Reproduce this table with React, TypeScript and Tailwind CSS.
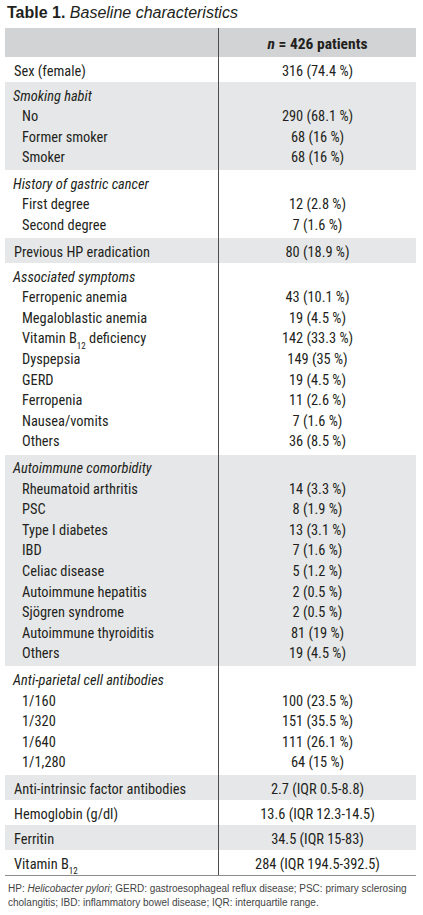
type Line = { label: React.ReactNode; value?: string; kind: "head" | "item" | "single" }

const B12 = (
  <>
    B<sub className="text-[9px] align-[-3px]">12</sub>
  </>
)

const sections: { bg: string; lines: Line[] }[] = [
  { bg: "bg-white", lines: [{ label: "Sex (female)", value: "316 (74.4 %)", kind: "single" }] },
  {
    bg: "bg-[#e6e7e8]",
    lines: [
      { label: "Smoking habit", kind: "head" },
      { label: "No", value: "290 (68.1 %)", kind: "item" },
      { label: "Former smoker", value: "68 (16 %)", kind: "item" },
      { label: "Smoker", value: "68 (16 %)", kind: "item" },
    ],
  },
  {
    bg: "bg-white",
    lines: [
      { label: "History of gastric cancer", kind: "head" },
      { label: "First degree", value: "12 (2.8 %)", kind: "item" },
      { label: "Second degree", value: "7 (1.6 %)", kind: "item" },
    ],
  },
  { bg: "bg-[#e6e7e8]", lines: [{ label: "Previous HP eradication", value: "80 (18.9 %)", kind: "single" }] },
  {
    bg: "bg-white",
    lines: [
      { label: "Associated symptoms", kind: "head" },
      { label: "Ferropenic anemia", value: "43 (10.1 %)", kind: "item" },
      { label: "Megaloblastic anemia", value: "19 (4.5 %)", kind: "item" },
      { label: <>Vitamin {B12} deficiency</>, value: "142 (33.3 %)", kind: "item" },
      { label: "Dyspepsia", value: "149 (35 %)", kind: "item" },
      { label: "GERD", value: "19 (4.5 %)", kind: "item" },
      { label: "Ferropenia", value: "11 (2.6 %)", kind: "item" },
      { label: "Nausea/vomits", value: "7 (1.6 %)", kind: "item" },
      { label: "Others", value: "36 (8.5 %)", kind: "item" },
    ],
  },
  {
    bg: "bg-[#e6e7e8]",
    lines: [
      { label: "Autoimmune comorbidity", kind: "head" },
      { label: "Rheumatoid arthritis", value: "14 (3.3 %)", kind: "item" },
      { label: "PSC", value: "8 (1.9 %)", kind: "item" },
      { label: "Type I diabetes", value: "13 (3.1 %)", kind: "item" },
      { label: "IBD", value: "7 (1.6 %)", kind: "item" },
      { label: "Celiac disease", value: "5 (1.2 %)", kind: "item" },
      { label: "Autoimmune hepatitis", value: "2 (0.5 %)", kind: "item" },
      { label: "Sjögren syndrome", value: "2 (0.5 %)", kind: "item" },
      { label: "Autoimmune thyroiditis", value: "81 (19 %)", kind: "item" },
      { label: "Others", value: "19 (4.5 %)", kind: "item" },
    ],
  },
  {
    bg: "bg-white",
    lines: [
      { label: "Anti-parietal cell antibodies", kind: "head" },
      { label: "1/160", value: "100 (23.5 %)", kind: "item" },
      { label: "1/320", value: "151 (35.5 %)", kind: "item" },
      { label: "1/640", value: "111 (26.1 %)", kind: "item" },
      { label: "1/1,280", value: "64 (15 %)", kind: "item" },
    ],
  },
  { bg: "bg-[#e6e7e8]", lines: [{ label: "Anti-intrinsic factor antibodies", value: "2.7 (IQR 0.5-8.8)", kind: "single" }] },
  { bg: "bg-white", lines: [{ label: "Hemoglobin (g/dl)", value: "13.6 (IQR 12.3-14.5)", kind: "single" }] },
  { bg: "bg-[#e6e7e8]", lines: [{ label: "Ferritin", value: "34.5 (IQR 15-83)", kind: "single" }] },
  { bg: "bg-white", lines: [{ label: <>Vitamin {B12}</>, value: "284 (IQR 194.5-392.5)", kind: "single" }] },
]

export default function App() {
  return (
    <div className="w-[423px] h-[915px] bg-white text-[#231f20] font-[Roboto,sans-serif] font-stretch-condensed">
      <div className="h-[28px] pl-[7px] pt-[3px] leading-[20px] text-[16px] font-['Liberation_Sans',Arial,sans-serif]">
        <span className="font-bold">Table 1.</span> <span className="italic">Baseline characteristics</span>
      </div>

      <div className="ml-[5px] w-[411px]">
        <div className="grid grid-cols-[214px_1fr] h-[29px] bg-[#d1d3d4]">
          <div className="border-r-[1.5px] border-[#4d4d4d]" />
          <div className="text-center leading-[32px] text-[15.5px] font-bold">
            <span className="italic">n</span> = 426 patients
          </div>
        </div>

        {sections.map((s, i) => (
          <div key={i} className={`grid grid-cols-[214px_1fr] text-[14.4px] ${s.bg}`}>
            <div className="border-r-[1.5px] border-[#4d4d4d] pt-[4.5px] pb-[1.5px]">
              {s.lines.map((l, j) => (
                <div
                  key={j}
                  className={
                    l.kind === "head"
                      ? "pl-[8px] italic leading-[20.6px] h-[20.6px]"
                      : l.kind === "item"
                      ? "pl-[17px] leading-[20.6px] h-[20.6px]"
                      : "pl-[9px] leading-[19px] h-[19px]"
                  }
                >
                  {l.label}
                </div>
              ))}
            </div>
            <div className="pt-[4.5px] pb-[1.5px] text-center">
              {s.lines.map((l, j) => (
                <div key={j} className={l.kind === "single" ? "leading-[19px] h-[19px]" : "leading-[20.6px] h-[20.6px]"}>
                  {l.value}
                </div>
              ))}
            </div>
          </div>
        ))}

        <div className="border-t border-[#8c8c8c]" />
      </div>

      <p className="mt-[6px] px-[8px] whitespace-nowrap text-[10px] leading-[13.5px] text-[#444] font-['Liberation_Sans',Arial,sans-serif]">
        HP: <span className="italic">Helicobacter pylori</span>; GERD: gastroesophageal reflux disease; PSC: primary sclerosing
        <br />
        cholangitis; IBD: inflammatory bowel disease; IQR: interquartile range.
      </p>
    </div>
  )
}
